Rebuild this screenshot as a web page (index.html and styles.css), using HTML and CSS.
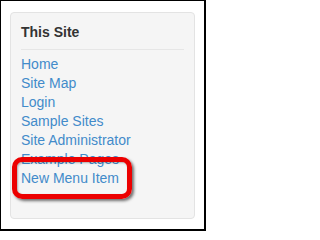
FILE: index.html
```html
<!DOCTYPE html>
<html>
<head>
<meta charset="utf-8">
<link rel="stylesheet" href="styles.css">
</head>
<body>
<div class="frame">
  <div class="panel">
    <h3 class="title">This Site</h3>
    <hr class="sep">
    <ul class="links">
      <li><a href="#">Home</a></li>
      <li><a href="#">Site Map</a></li>
      <li><a href="#">Login</a></li>
      <li><a href="#">Sample Sites</a></li>
      <li><a href="#">Site Administrator</a></li>
      <li><a href="#">Example Pages</a></li>
      <li class="marked"><a href="#">New Menu Item</a></li>
    </ul>
  </div>
</div>
</body>
</html>
```
FILE: styles.css
```css
html, body {
  margin: 0;
  padding: 0;
  background: #fff;
}
.frame {
  box-sizing: border-box;
  width: 206px;
  height: 231px;
  border-style: solid;
  border-color: #000;
  border-width: 1px 2px 2px 1px;
  padding: 11px 9px 10px 9px;
  display: flex;
  flex-direction: column;
}
.panel {
  box-sizing: border-box;
  height: 207px;
  background: #f5f5f5;
  border: 1px solid #e3e3e3;
  border-radius: 4px;
  padding: 9px 10px 0 10px;
  display: flex;
  flex-direction: column;
  font-family: "Liberation Sans", Arial, sans-serif;
  font-size: 14px;
}
.title {
  margin: 0;
  font-size: 14px;
  font-weight: bold;
  line-height: 20px;
  color: #333;
}
.sep {
  margin: 7px 0 5px 0;
  border: 0;
  border-top: 1px solid #e6e6e6;
  height: 0;
}
.links {
  list-style: none;
  margin: 0;
  padding: 0;
  line-height: 19px;
}
.links a {
  color: #428bca;
  text-decoration: none;
}
.marked {
  position: relative;
}
.marked::after {
  content: "";
  position: absolute;
  box-sizing: border-box;
  left: -9px;
  top: -12px;
  width: 120px;
  height: 42px;
  border: 5px solid #ec0000;
  border-radius: 10px;
  box-shadow: 2px 2px 3px rgba(0,0,0,0.55), inset 1px 1px 2px rgba(0,0,0,0.3);
}
```
